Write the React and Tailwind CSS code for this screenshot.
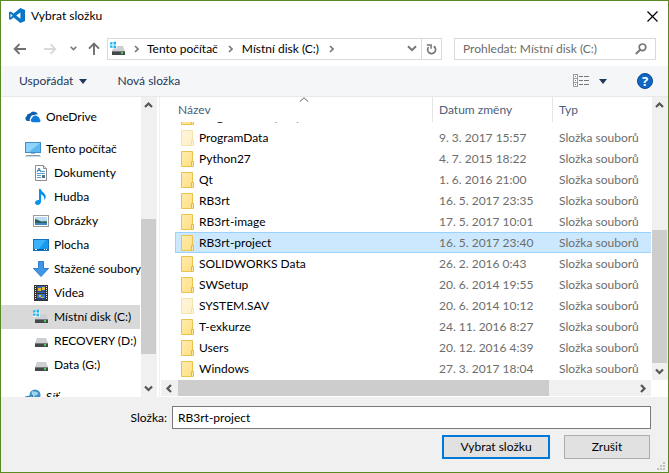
import React from "react";

const files = [
  { name: "ProgramData", date: "9. 3. 2017 15:57", faded: true },
  { name: "Python27", date: "4. 7. 2015 18:22" },
  { name: "Qt", date: "1. 6. 2016 21:00" },
  { name: "RB3rt", date: "16. 5. 2017 23:35" },
  { name: "RB3rt-image", date: "17. 5. 2017 10:01" },
  { name: "RB3rt-project", date: "16. 5. 2017 23:40", selected: true },
  { name: "SOLIDWORKS Data", date: "26. 2. 2016 0:43" },
  { name: "SWSetup", date: "20. 6. 2014 19:55" },
  { name: "SYSTEM.SAV", date: "20. 6. 2014 10:12", faded: true },
  { name: "T-exkurze", date: "24. 11. 2016 8:27" },
  { name: "Users", date: "20. 12. 2016 4:39" },
  { name: "Windows", date: "27. 3. 2017 18:04" },
];

function CodeLogo() {
  return (
    <svg width="16" height="16" viewBox="0 0 16 16" className="shrink-0" aria-hidden="true">
      <path
        fill="#0b76c5"
        fillRule="evenodd"
        d="M11.4 0 16 2v11l-4.600 2-6.800-5.500-2.900 2.300L0 11.200V4l1.700-.6 2.900 2.200zM11.400 4.400 7.200 7.500l4.200 3.200zM1.500 5.700v3.800L3.600 7.600z"
      />
    </svg>
  );
}

function Folder({ faded }) {
  return (
    <svg width="14" height="16" viewBox="0 0 14 16" className={faded ? "shrink-0 opacity-45" : "shrink-0"} aria-hidden="true">
      <defs>
        <linearGradient id="folder" x1="0" y1="0" x2="1" y2="1">
          <stop offset="0" stopColor="#ffebad" />
          <stop offset="1" stopColor="#ffdf7f" />
        </linearGradient>
      </defs>
      <path d="M.5.5h11v10h1v5H.5z" fill="url(#folder)" stroke="#e8c44f" />
      <path d="M10.5 15v-4.5h2V15" fill="#ffe9a3" stroke="#e3bb3f" />
    </svg>
  );
}

function DriveBody() {
  return (
    <g>
      <path d="M4 5h9l2 5H2z" fill="#cdd0d2" />
      <rect x="2" y="10" width="13" height="4" fill="#45484b" />
      <rect x="2" y="10" width="13" height="1" fill="#77797c" />
      <rect x="11" y="11" width="2" height="2" fill="#3ddc4b" />
    </g>
  );
}

function WinDrive() {
  return (
    <svg width="16" height="16" viewBox="0 0 16 16" className="shrink-0" aria-hidden="true">
      <DriveBody />
      <path d="M0 1h7v7H0z" fill="#fff" fillOpacity=".7" />
      <path d="M0 1.400 2.500 1v2.500H0zM3.500 1 6 .6v2.900H3.500zM0 4.500h2.500V7L0 6.600zM3.500 4.500H6v2.900L3.500 7z" fill="#1cb4ee" />
    </svg>
  );
}

function Drive() {
  return (
    <svg width="16" height="16" viewBox="0 0 16 16" className="shrink-0" aria-hidden="true">
      <DriveBody />
    </svg>
  );
}

function OneDrive() {
  return (
    <svg width="16" height="16" viewBox="0 0 16 16" className="shrink-0" aria-hidden="true">
      <path d="M5 12H2.6A2.5 2.5 0 0 1 1.7 7.3 3.3 3.3 0 0 1 5 4.6 4.6 4.6 0 0 1 13 5.4 4.3 4.3 0 0 0 9.5 6 3.9 3.9 0 0 0 5.2 9.2 2.6 2.6 0 0 0 5 12z" fill="#0b5fb0" />
      <path d="M7.6 13.3A2.2 2.2 0 0 1 6.9 9.2 3.3 3.3 0 0 1 12.6 7.6 2.8 2.8 0 0 1 14.6 10 1.8 1.8 0 0 1 14.2 13.3z" fill="#0f7bd8" />
    </svg>
  );
}

function Computer() {
  return (
    <svg width="16" height="16" viewBox="0 0 16 16" className="shrink-0" aria-hidden="true">
      <rect x=".5" y="1.5" width="15" height="10" fill="#5bb9f2" stroke="#3d8fca" />
      <path d="M1 2h14L4 11H1z" fill="#8fd3fb" />
      <path d="M6 12h4v1H6z" fill="#a5b4bf" />
      <path d="M1 14h14v1H1z" fill="#8b9fad" />
      <path d="M0 15h16v1H0z" fill="#cdd6dc" />
    </svg>
  );
}

function Documents() {
  return (
    <svg width="16" height="16" viewBox="0 0 16 16" className="shrink-0" aria-hidden="true">
      <path d="M2.5.5h8l3 3v12h-11z" fill="#fff" stroke="#8c8c8c" />
      <path d="M10.5.5v3h3" fill="#e5e5e5" stroke="#8c8c8c" />
      <path d="M4 7 6 3l2 4M4.500 5.500h3" stroke="#2f83bd" fill="none" />
      <path d="M8 6.500h4M4 8.500h8M4 10.500h4M4 12.500h4" stroke="#5d9fc9" />
      <path d="M9 10h3v3H9z" fill="#4c7482" />
    </svg>
  );
}

function Music() {
  return (
    <svg width="16" height="16" viewBox="0 0 16 16" className="shrink-0" aria-hidden="true">
      <path d="M6 0h1.800c.4 3 4.900 4 4.900 7.600 0 1.400-.6 2.500-1.500 3.300.5-2.800-.9-4.500-3.200-5.300v7.100c0 1.900-1.600 3.300-3.400 3.300C3.100 16 2 15.100 2 13.800c0-1.600 1.700-2.900 3.400-2.900L6 11z" fill="#0a91ea" />
    </svg>
  );
}

function Pictures() {
  return (
    <svg width="16" height="16" viewBox="0 0 16 16" className="shrink-0" aria-hidden="true">
      <rect x=".5" y="2.5" width="15" height="11" fill="#fff" stroke="#9b9b9b" />
      <rect x="2" y="4" width="12" height="8" fill="#b9dcf2" />
      <path d="M2 6c3 0 4 2.500 7 2.500 2 0 4-.5 5 0V10H2z" fill="#2f5f5b" />
      <path d="M2 10h12v2H2z" fill="#3f86c4" />
    </svg>
  );
}

function Desktop() {
  return (
    <svg width="16" height="16" viewBox="0 0 16 16" className="shrink-0" aria-hidden="true">
      <rect x=".5" y="2.5" width="15" height="11" fill="#149bf0" stroke="#1272bd" />
      <path d="M1 3h12L6 12H1z" fill="#3bb2fa" />
      <path d="M1 12h14v1H1z" fill="#0c5a9c" />
      <path d="M2 12h2v1H2zM11 12h1v1h-1zM13 12h1v1h-1z" fill="#fff" />
    </svg>
  );
}

function Download() {
  return (
    <svg width="16" height="16" viewBox="0 0 16 16" className="shrink-0" aria-hidden="true">
      <path d="M5.500.5h5v7h5L8 15.500.5 7.500h5z" fill="#3f97e6" stroke="#2d7fcb" strokeLinejoin="round" />
    </svg>
  );
}

function Video() {
  return (
    <svg width="16" height="16" viewBox="0 0 16 16" className="shrink-0" shapeRendering="crispEdges" aria-hidden="true">
      <path d="M1 0h14v16H1z" fill="#333" />
      <path d="M4 1h8v7H4z" fill="#3267b0" />
      <path d="M4 9h8v6H4z" fill="#3b78c4" />
      <path d="M5 3h3v3H5zM9 2h3v3H9zM6 10h2v2H6zM8 12h3v1H8z" fill="#e5b93c" />
      <path d="M4 6h8v1H4zM4 13h8v2H4z" fill="#28457c" />
      <path d="M2 1h1v1H2zM2 3h1v1H2zM2 5h1v1H2zM2 7h1v1H2zM2 9h1v1H2zM2 11h1v1H2zM2 13h1v1H2zM13 1h1v1h-1zM13 3h1v1h-1zM13 5h1v1h-1zM13 7h1v1h-1zM13 9h1v1h-1zM13 11h1v1h-1zM13 13h1v1h-1z" fill="#e8e8e8" />
    </svg>
  );
}

function Network() {
  return (
    <svg width="16" height="16" viewBox="0 0 16 16" className="shrink-0" aria-hidden="true">
      <circle cx="10" cy="6" r="5.500" fill="#3f93c4" />
      <path d="M7 2c2 1 5 0 6 2s-3 2-4 4-3-2-2-6z" fill="#9fd4ee" />
      <path d="M0 7.500 8 6v6H0z" fill="#2a76a8" />
      <path d="M1 8.500 7 7v4H1z" fill="#63b7e6" />
    </svg>
  );
}

function Chevron({ dir }) {
  const paths = {
    up: "M1 6 4.500 2.500 8 6",
    down: "M1 2.500 4.500 6 8 2.500",
    left: "M6 1 2.500 4.500 6 8",
    right: "M3 1 6.500 4.500 3 8",
  };
  return (
    <svg width="9" height="9" viewBox="0 0 9 9" className="shrink-0" aria-hidden="true">
      <path d={paths[dir]} fill="none" stroke="#555" strokeWidth="2.200" />
    </svg>
  );
}

function Crumb() {
  return (
    <svg width="5" height="8" viewBox="0 0 5 8" className="shrink-0" aria-hidden="true">
      <path d="M1 1 4 4 1 7" fill="none" stroke="#777" strokeWidth="1.600" />
    </svg>
  );
}

function Triangle() {
  return (
    <svg width="8" height="5" viewBox="0 0 8 5" className="shrink-0" aria-hidden="true">
      <path d="M0 0h8L4 5z" fill="#1e395b" />
    </svg>
  );
}

function VScroll({ before, thumb, after }) {
  return (
    <div className="flex w-4 shrink-0 flex-col bg-[#f0f0f0] pr-px">
      <button aria-label="Nahoru" className="flex h-[17px] w-full shrink-0 items-center justify-center"><Chevron dir="up" /></button>
      <div className={before} />
      <div className={"w-full bg-[#cdcdcd] " + thumb} />
      <div className={after} />
      <button aria-label="Dolů" className="flex h-[17px] w-full shrink-0 items-center justify-center"><Chevron dir="down" /></button>
    </div>
  );
}

function SideItem({ icon, label, root, selected }) {
  return (
    <a
      href="#"
      className={
        "flex h-6 shrink-0 items-center gap-[5px] whitespace-nowrap " +
        (root ? "pl-6 " : "pl-8 ") +
        (selected ? "bg-[#d9d9d9]" : "")
      }
    >
      {icon}
      {label}
    </a>
  );
}

function FileRow({ name, date, faded, selected }) {
  const mark = selected ? "border-y border-[#99d1ff] bg-[#cce8ff] " : "";
  return (
    <tr className="h-[21px]">
      <td className={mark + (selected ? "border-l pl-[5px]" : "pl-[6px]")}>
        <div className="flex items-center gap-1 leading-4">
          <Folder faded={faded} />
          {name}
        </div>
      </td>
      <td className={mark + "pl-[6px] leading-4 text-[#6d6d6d]"}>{date}</td>
      <td className={mark + "pl-[6px] leading-4 text-[#6d6d6d]"}>Složka souborů</td>
    </tr>
  );
}

export default function App() {
  return (
    <div className="flex h-screen w-full flex-col overflow-hidden border border-[#5a8a22] bg-white font-['Lato','Open_Sans',sans-serif] text-[12px] leading-4 text-black">
      <header className="flex h-[30px] shrink-0 items-center pr-2 pl-2">
        <CodeLogo />
        <h1 className="ml-[6px] flex-1">Vybrat složku</h1>
        <button aria-label="Zavřít" className="flex h-4 w-4 items-center justify-center">
          <svg width="11" height="11" viewBox="0 0 11 11" aria-hidden="true">
            <path d="M.5.5l10 10M10.500.5l-10 10" stroke="#000" strokeWidth="1.200" />
          </svg>
        </button>
      </header>

      <nav className="flex h-[35px] shrink-0 items-center pr-3 pl-3">
        <button aria-label="Zpět">
          <svg width="14" height="12" viewBox="0 0 14 12" aria-hidden="true">
            <path d="M13 6H2M6.500 1.200 1.700 6l4.800 4.800" fill="none" stroke="#6f6f6f" strokeWidth="1.900" />
          </svg>
        </button>
        <button aria-label="Vpřed" className="ml-4">
          <svg width="14" height="12" viewBox="0 0 14 12" aria-hidden="true">
            <path d="M1 6h11M7.500 1.200 12.300 6l-4.800 4.800" fill="none" stroke="#d9d9d9" strokeWidth="1.900" />
          </svg>
        </button>
        <button aria-label="Poslední umístění" className="ml-[13px]">
          <svg width="7" height="5" viewBox="0 0 7 5" aria-hidden="true">
            <path d="M.7.7 3.500 3.500 6.300.7" fill="none" stroke="#777" strokeWidth="1.600" />
          </svg>
        </button>
        <button aria-label="O úroveň výš" className="ml-[11px]">
          <svg width="12" height="13" viewBox="0 0 12 13" aria-hidden="true">
            <path d="M6 13V2M1 6.700 6 1.700l5 5" fill="none" stroke="#6f6f6f" strokeWidth="1.900" />
          </svg>
        </button>
        <div className="ml-[7px] flex h-[22px] min-w-0 flex-[333] items-center border border-[#d9d9d9]">
          <div className="flex min-w-0 flex-1 items-center pl-[2px]">
            <WinDrive />
            <span className="ml-2"><Crumb /></span>
            <button className="ml-2 whitespace-nowrap">Tento počítač</button>
            <span className="ml-[10px]"><Crumb /></span>
            <button className="ml-[9px] whitespace-nowrap">Místní disk (C:)</button>
            <span className="ml-[10px]"><Crumb /></span>
          </div>
          <button aria-label="Předchozí umístění" className="mr-1">
            <svg width="10" height="7" viewBox="0 0 10 7" aria-hidden="true">
              <path d="M1 1.200 5 5.200l4-4" fill="none" stroke="#777" strokeWidth="2" />
            </svg>
          </button>
          <button aria-label="Aktualizovat" className="flex h-full w-5 items-center justify-center border-l border-[#d9d9d9]">
            <svg width="11" height="12" viewBox="0 0 11 12" aria-hidden="true">
              <path d="M7.800 3.300A4 4 0 1 1 2.600 4" fill="none" stroke="#777" strokeWidth="1.700" />
              <path d="M.8 2h4.300v3.800" fill="none" stroke="#777" strokeWidth="1.500" />
            </svg>
          </button>
        </div>
        <label className="ml-3 flex h-[22px] min-w-0 flex-[184] items-center border border-[#d9d9d9] px-2">
          <input
            type="search"
            aria-label="Prohledat"
            placeholder="Prohledat: Místní disk (C:)"
            className="min-w-0 flex-1 outline-none placeholder:text-[#6d6d6d]"
          />
          <svg width="12" height="12" viewBox="0 0 12 12" className="shrink-0" aria-hidden="true">
            <circle cx="7.500" cy="4.300" r="3.300" fill="none" stroke="#777" strokeWidth="1.700" />
            <path d="M5.200 6.700.8 11" stroke="#777" strokeWidth="2" />
          </svg>
        </label>
      </nav>

      <div className="flex h-[31px] shrink-0 items-center border-b border-[#e8e8e8] bg-[#f5f6f7] pr-[15px] pl-[18px] text-[#1e395b]">
        <button className="flex items-center gap-[6px]">Uspořádat <Triangle /></button>
        <button className="ml-[30px]">Nová složka</button>
        <button aria-label="Změnit zobrazení" className="ml-auto flex items-center gap-[10px]">
          <svg width="16" height="14" viewBox="0 0 16 14" shapeRendering="crispEdges" aria-hidden="true">
            <path d="M0 0h5v13H0z" fill="#9a9a9a" />
            <path d="M1 1h3v3H1zM1 5h3v3H1zM1 9h3v3H1z" fill="#fff" />
            <path d="M2 2h1v1H2z" fill="#3c9a5f" />
            <path d="M2 6h1v1H2z" fill="#2b8be0" />
            <path d="M2 10h1v1H2z" fill="#d33" />
            <path d="M6 2h4v1H6zM11 2h5v1h-5zM6 6h4v1H6zM11 6h5v1h-5zM6 10h4v1H6zM11 10h5v1h-5z" fill="#777" />
          </svg>
          <Triangle />
        </button>
        <button aria-label="Nápověda" className="ml-[30px] flex h-4 w-4 items-center justify-center rounded-full border border-[#0a4a94] bg-[#0f66c4] font-['Open_Sans',sans-serif] text-[13px] font-bold text-white">?</button>
      </div>

      <main className="flex min-h-0 flex-1">
        <aside className="flex w-[140px] shrink-0 flex-col overflow-hidden pt-2 pr-px">
          <SideItem root icon={<OneDrive />} label="OneDrive" />
          <div className="h-2 shrink-0" />
          <SideItem root icon={<Computer />} label="Tento počítač" />
          <SideItem icon={<Documents />} label="Dokumenty" />
          <SideItem icon={<Music />} label="Hudba" />
          <SideItem icon={<Pictures />} label="Obrázky" />
          <SideItem icon={<Desktop />} label="Plocha" />
          <SideItem icon={<Download />} label="Stažené soubory" />
          <SideItem icon={<Video />} label="Videa" />
          <SideItem selected icon={<WinDrive />} label="Místní disk (C:)" />
          <SideItem icon={<Drive />} label="RECOVERY (D:)" />
          <SideItem icon={<Drive />} label="Data (G:)" />
          <div className="h-2 shrink-0" />
          <SideItem root icon={<Network />} label="Síť" />
        </aside>
        <VScroll before="flex-[105]" thumb="flex-[135]" after="flex-[26]" />
        <div className="mr-px ml-[2px] w-px shrink-0 bg-[#f0f0f0]" />

        <section className="flex min-w-0 flex-1 flex-col">
          <div className="flex min-h-0 flex-1">
            <div className="min-w-0 flex-1 overflow-hidden pr-px pl-[14px]">
              <table className="w-full table-fixed border-separate border-spacing-0 text-left whitespace-nowrap">
                <colgroup>
                  <col />
                  <col className="w-[120px]" />
                  <col className="w-[98px]" />
                </colgroup>
                <thead className="text-[#4c607a]">
                  <tr className="h-[25px]">
                    <th className="relative border-r border-[#e5e5e5] pl-[3px] font-normal">
                      Název
                      <svg width="9" height="5" viewBox="0 0 9 5" className="absolute top-0 left-1/2 -translate-x-1/2" aria-hidden="true">
                        <path d="M.5 4.500 4.500.8l4 3.700" fill="none" stroke="#666" />
                      </svg>
                    </th>
                    <th className="border-r border-[#e5e5e5] pl-[6px] font-normal">Datum změny</th>
                    <th className="pl-[6px] font-normal">Typ</th>
                  </tr>
                </thead>
                <tbody>
                  <tr>
                    <td className="pl-[6px]">
                      <div className="flex h-[5px] items-end overflow-hidden">
                        <div className="flex h-[21px] shrink-0 items-center gap-1">
                          <Folder />
                          Program Files (x86)
                        </div>
                      </div>
                    </td>
                    <td />
                    <td />
                  </tr>
                  {files.map((f) => (
                    <FileRow key={f.name} {...f} />
                  ))}
                </tbody>
              </table>
            </div>
            <VScroll before="flex-[116]" thumb="flex-[133]" after="flex-0" />
          </div>
          <div className="mr-[17px] mb-px flex h-4 shrink-0 items-center bg-[#f0f0f0]">
            <button aria-label="Doleva" className="flex w-[17px] justify-center"><Chevron dir="left" /></button>
            <div className="h-full flex-[371] bg-[#cdcdcd]" />
            <div className="flex-[85]" />
            <button aria-label="Doprava" className="flex w-[17px] justify-center"><Chevron dir="right" /></button>
          </div>
        </section>
      </main>

      <footer className="flex shrink-0 flex-col bg-[#f0f0f0] pt-[9px]">
        <div className="flex items-center pr-[17px]">
          <label htmlFor="folder-name" className="w-[171px] shrink-0 pr-[5px] text-right">Složka:</label>
          <input
            id="folder-name"
            defaultValue="RB3rt-project"
            className="h-[23px] min-w-0 flex-1 border border-[#7a7a7a] bg-white px-[5px] outline-none"
          />
        </div>
        <div className="mt-[6px] flex h-6 justify-end gap-[14px] pr-[18px]">
          <button className="w-[108px] border-2 border-[#0078d7] bg-[#e1e1e1]">Vybrat složku</button>
          <button className="w-[86px] border border-[#adadad] bg-[#e1e1e1]">Zrušit</button>
        </div>
        <svg width="8" height="8" viewBox="0 0 8 8" className="mt-[3px] mr-[3px] mb-[2px] self-end" shapeRendering="crispEdges" aria-hidden="true">
          <path d="M6 0h2v2H6zM3 3h2v2H3zM6 3h2v2H6zM0 6h2v2H0zM3 6h2v2H3zM6 6h2v2H6z" fill="#bfbfbf" />
        </svg>
      </footer>
    </div>
  );
}
